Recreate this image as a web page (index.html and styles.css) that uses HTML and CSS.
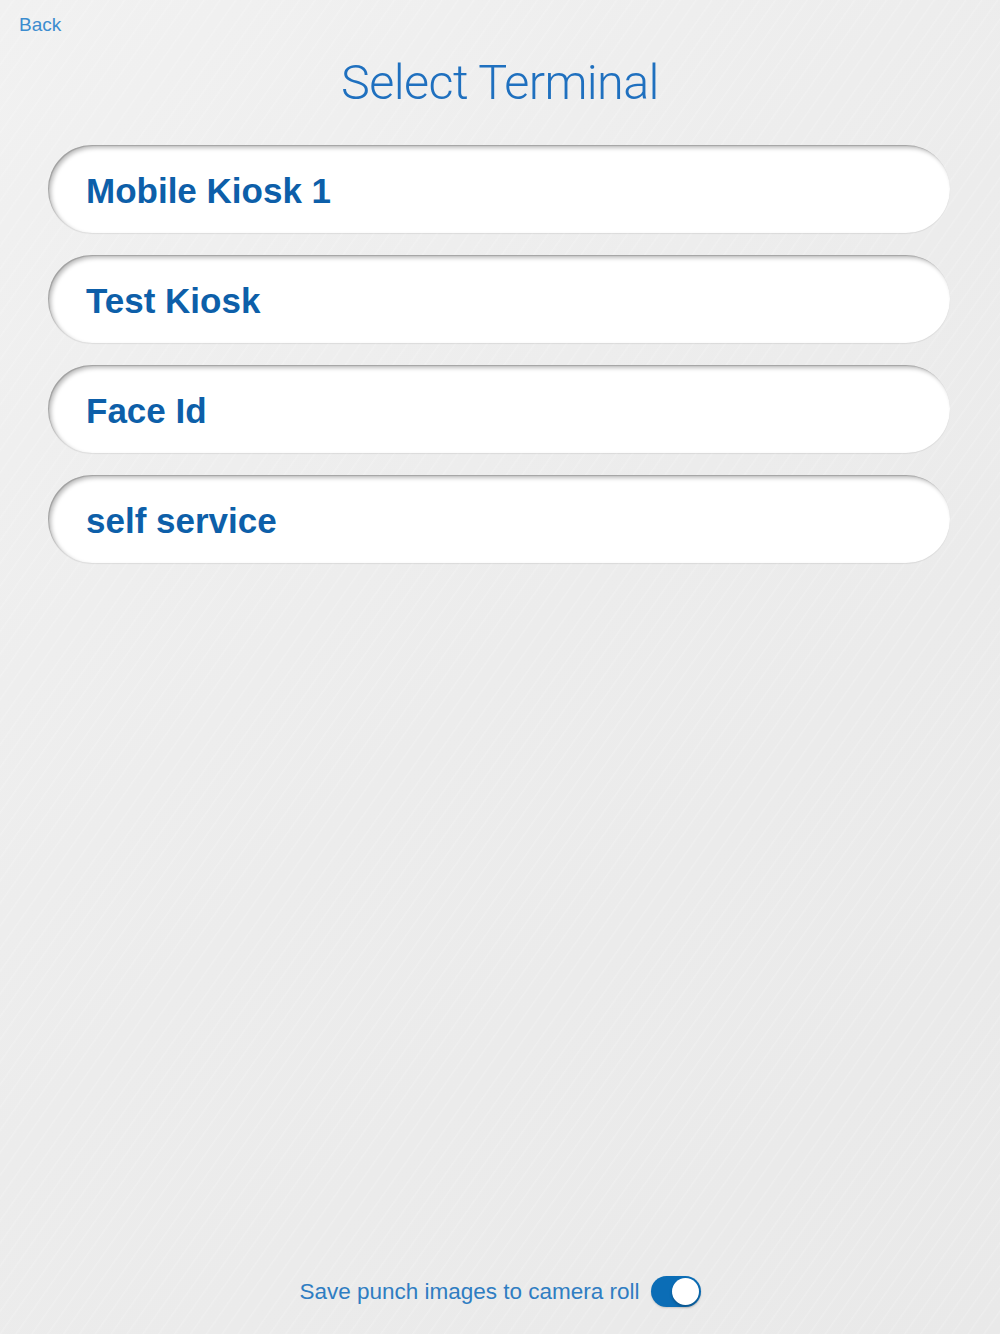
FILE: index.html
```html
<!DOCTYPE html>
<html>
<head>
<meta charset="utf-8">
<link rel="stylesheet" href="styles.css">
</head>
<body>
<div class="screen">
  <header class="top">
    <a class="back">Back</a>
    <h1 class="title">Select Terminal</h1>
  </header>
  <ul class="terminals">
    <li class="terminal">Mobile Kiosk 1</li>
    <li class="terminal">Test Kiosk</li>
    <li class="terminal">Face Id</li>
    <li class="terminal">self service</li>
  </ul>
  <footer class="footer">
    <span class="footer-label">Save punch images to camera roll</span>
    <span class="toggle"><span class="knob"></span></span>
  </footer>
</div>
</body>
</html>
```
FILE: styles.css
```css
html, body {
  margin: 0;
  padding: 0;
}
body {
  width: 1000px;
  height: 1334px;
  overflow: hidden;
  font-family: "Liberation Sans", Arial, sans-serif;
  background-color: #ececec;
  background-image:
    repeating-linear-gradient(125deg, rgba(255,255,255,0) 0px, rgba(255,255,255,0) 10px, rgba(255,255,255,0.18) 11px, rgba(255,255,255,0) 13px),
    linear-gradient(135deg, #f1f1f1 0%, #ececec 50%, #e9e9e9 100%);
}
.screen {
  height: 1334px;
  display: flex;
  flex-direction: column;
}
.top {
  display: flex;
  flex-direction: column;
}
.back {
  display: block;
  margin: 14px 0 0 19px;
  font-size: 19px;
  line-height: 22px;
  color: #3c8ccf;
}
.title {
  margin: 17px 0 0 0;
  text-align: center;
  font-family: Roboto, "Liberation Sans", sans-serif;
  font-weight: 300;
  font-size: 48.5px;
  line-height: 60px;
  color: #1f70bf;
  letter-spacing: -0.6px;
}
.terminals {
  list-style: none;
  margin: 32px 50px 0 48px;
  padding: 0;
  display: flex;
  flex-direction: column;
  gap: 22px;
}
.terminal {
  box-sizing: border-box;
  height: 88px;
  border-radius: 44px;
  background: #ffffff;
  box-shadow:
    inset 3px 3px 4px rgba(0,0,0,0.26),
    inset 1px 1px 1px rgba(0,0,0,0.18),
    0 1px 1px rgba(0,0,0,0.08);
  display: flex;
  align-items: center;
  padding: 3px 0 0 38px;
  font-weight: bold;
  font-size: 35px;
  color: #0d5fa9;
}
.footer {
  margin-top: auto;
  margin-bottom: 27px;
  display: flex;
  align-items: center;
  justify-content: center;
  gap: 11px;
}
.footer-label {
  font-size: 22.5px;
  color: #2f7dc2;
}
.toggle {
  position: relative;
  width: 50px;
  height: 31px;
  border-radius: 16px;
  background: #0b6db6;
  box-shadow: 0 1px 2px rgba(0,0,0,0.15);
}
.knob {
  position: absolute;
  right: 2px;
  top: 2px;
  width: 27px;
  height: 27px;
  border-radius: 50%;
  background: #ffffff;
  box-shadow: 0 2px 3px rgba(0,0,0,0.25);
}
```
